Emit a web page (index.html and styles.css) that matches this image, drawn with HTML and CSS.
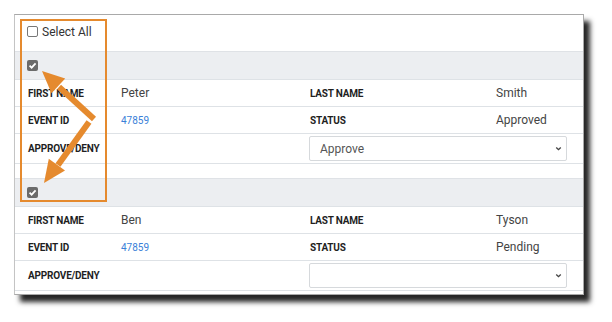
FILE: index.html
```html
<!DOCTYPE html>
<html lang="en">
  <head>
    <meta charset="UTF-8" />
    <title>Approve / Deny</title>
    <link rel="stylesheet" href="styles.css">
  </head>
  <body>
    <!-- card with the records -->
    <div class="card">
      <label class="select-all">
        <span class="box"></span> Select All
      </label>

      <div class="record">
        <div class="record-head"><span class="box checked"><svg viewBox="0 0 10 10"><path d="M2.3 5.2 L4.2 7 L7.8 3" /></svg></span></div>
        <div class="row">
          <div class="label">FIRST NAME</div>
          <div class="value">Peter</div>
          <div class="label">LAST NAME</div>
          <div class="value">Smith</div>
        </div>
        <div class="row">
          <div class="label">EVENT ID</div>
          <div class="value link">47859</div>
          <div class="label">STATUS</div>
          <div class="value">Approved</div>
        </div>
        <div class="row row-tall">
          <div class="label">APPROVE/DENY</div>
          <div class="value"></div>
          <div class="select">
            <span>Approve</span>
            <svg viewBox="0 0 10 10"><path d="M2.5 3.8 L5 6.3 L7.5 3.8" /></svg>
          </div>
        </div>
      </div>

      <div class="record">
        <div class="record-head"><span class="box checked"><svg viewBox="0 0 10 10"><path d="M2.3 5.2 L4.2 7 L7.8 3" /></svg></span></div>
        <div class="row">
          <div class="label">FIRST NAME</div>
          <div class="value">Ben</div>
          <div class="label">LAST NAME</div>
          <div class="value">Tyson</div>
        </div>
        <div class="row">
          <div class="label">EVENT ID</div>
          <div class="value link">47859</div>
          <div class="label">STATUS</div>
          <div class="value">Pending</div>
        </div>
        <div class="row row-tall">
          <div class="label">APPROVE/DENY</div>
          <div class="value"></div>
          <div class="select">
            <span></span>
            <svg viewBox="0 0 10 10"><path d="M2.5 3.8 L5 6.3 L7.5 3.8" /></svg>
          </div>
        </div>
      </div>
    </div>

    <!-- orange callout on top -->
    <div class="callout"></div>
    <svg class="arrows" viewBox="0 0 612 322">
      <line x1="94" y1="119" x2="59" y2="87" />
      <polygon points="42,71 65.2,78.6 51.5,93.3" />
      <line x1="89" y1="122" x2="58" y2="165" />
      <polygon points="44,183 65,170.6 48.8,158.8" />
    </svg>
  </body>
</html>
```
FILE: styles.css
```css
body {
  margin: 0;
  padding: 14px 0 0 14px;
  background: #fff;
  font-family: Roboto, "Liberation Sans", sans-serif;
  position: relative;
  height: 308px;
}

/* card */
.card {
  width: 568px;
  border: 1px solid #a9a9a9;
  border-left-color: #c4c4c4;
  background: #fff;
  padding-bottom: 3px;
  box-shadow: 6px 7px 5px rgba(0, 0, 0, 0.85);
}

.select-all {
  display: flex;
  align-items: center;
  gap: 4px;
  height: 36px;
  padding: 0 0 3px 12px;
  box-sizing: border-box;
  font-size: 12px;
  color: #333;
}

/* checkbox */
.box {
  width: 9px;
  height: 9px;
  border: 1px solid #777;
  border-radius: 2px;
  background: #fff;
  display: inline-block;
}
.box.checked {
  width: 11px;
  height: 11px;
  border: none;
  background: #6b6b6b;
}
.box svg {
  display: block;
  width: 11px;
  height: 11px;
  fill: none;
  stroke: #fff;
  stroke-width: 1.6;
}

/* records */
.record {
  border-bottom: 1px solid #dee2e6;
  margin-bottom: 14px;
}
.record:last-child {
  margin-bottom: 0;
}
.record-head {
  height: 28px;
  background: #eceef1;
  border-top: 1px solid #dfe2e6;
  box-sizing: border-box;
  display: flex;
  align-items: center;
  padding-left: 12px;
}
.row {
  display: grid;
  grid-template-columns: 94px 188px 187px 1fr;
  align-items: center;
  height: 27px;
  border-top: 1px solid #dee2e6;
  box-sizing: border-box;
}
.row-tall {
  height: 30px;
  grid-template-columns: 94px 188px 1fr;
}
.label {
  padding-left: 13px;
  font-size: 10px;
  font-weight: bold;
  letter-spacing: -0.2px;
  color: #1f1f1f;
}
.value {
  padding-left: 12px;
  font-size: 12px;
  color: #444;
}
.value.link {
  font-size: 10px;
  color: #3a7fd8;
}

/* dropdown */
.select {
  margin: 0 16px 0 12px;
  height: 25px;
  border: 1px solid #d6d9dc;
  border-radius: 2px;
  box-sizing: border-box;
  display: flex;
  align-items: center;
  justify-content: space-between;
  padding: 0 3px 0 10px;
  font-size: 12px;
  color: #555;
}
.select svg {
  width: 9px;
  height: 9px;
  fill: none;
  stroke: #444;
  stroke-width: 1.5;
}

/* orange annotation */
.callout {
  position: absolute;
  left: 20px;
  top: 19px;
  width: 83px;
  height: 179px;
  border: 2.5px solid #e58a2e;
  pointer-events: none;
}
.arrows {
  position: absolute;
  left: 0;
  top: 0;
  width: 612px;
  height: 322px;
  pointer-events: none;
}
.arrows line {
  stroke: #e58a2e;
  stroke-width: 6;
}
.arrows polygon {
  fill: #e58a2e;
}
```
